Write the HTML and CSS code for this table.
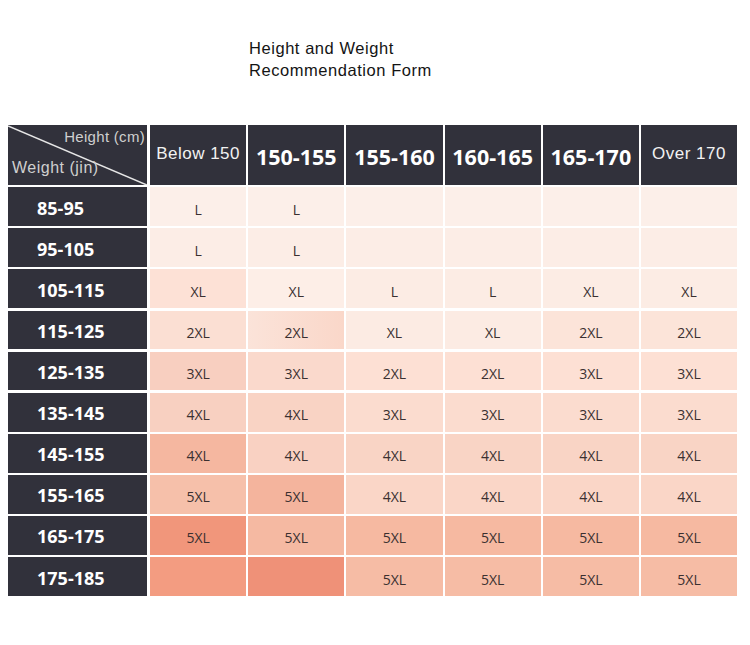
FILE: index.html
```html
<!DOCTYPE html>
<html>
<head>
<meta charset="utf-8">
<link rel="stylesheet" href="styles.css">
</head>
<body>
<div class="page">
  <h1 class="title">Height and Weight<br>Recommendation Form</h1>
  <div class="table">
    <div class="corner">
      <svg class="diag" viewBox="0 0 139 60" preserveAspectRatio="none"><line x1="0" y1="1" x2="139" y2="60" stroke="#e6e6e6" stroke-width="1.6"/></svg>
      <span class="c-h">Height (cm)</span>
      <span class="c-w">Weight (jin)</span>
    </div>
    <div class="hd reg">Below 150</div>
    <div class="hd">150-155</div>
    <div class="hd">155-160</div>
    <div class="hd">160-165</div>
    <div class="hd">165-170</div>
    <div class="hd reg">Over 170</div>

    <div class="rh">85-95</div>
    <div class="c r1">L</div><div class="c r1">L</div><div class="c r1"></div><div class="c r1"></div><div class="c r1"></div><div class="c r1"></div>

    <div class="rh">95-105</div>
    <div class="c r2">L</div><div class="c r2">L</div><div class="c r2"></div><div class="c r2"></div><div class="c r2"></div><div class="c r2"></div>

    <div class="rh">105-115</div>
    <div class="c a3">XL</div><div class="c b3">XL</div><div class="c r3">L</div><div class="c r3">L</div><div class="c r3">XL</div><div class="c r3">XL</div>

    <div class="rh">115-125</div>
    <div class="c a4">2XL</div><div class="c b4">2XL</div><div class="c r4l">XL</div><div class="c r4l">XL</div><div class="c r4">2XL</div><div class="c r4">2XL</div>

    <div class="rh">125-135</div>
    <div class="c a5">3XL</div><div class="c b5">3XL</div><div class="c r5">2XL</div><div class="c r5">2XL</div><div class="c r5">3XL</div><div class="c r5">3XL</div>

    <div class="rh">135-145</div>
    <div class="c a6">4XL</div><div class="c b6">4XL</div><div class="c r6">3XL</div><div class="c r6">3XL</div><div class="c r6">3XL</div><div class="c r6">3XL</div>

    <div class="rh">145-155</div>
    <div class="c a7">4XL</div><div class="c b7">4XL</div><div class="c r7">4XL</div><div class="c r7">4XL</div><div class="c r7">4XL</div><div class="c r7">4XL</div>

    <div class="rh">155-165</div>
    <div class="c a8">5XL</div><div class="c b8">5XL</div><div class="c r8">4XL</div><div class="c r8">4XL</div><div class="c r8">4XL</div><div class="c r8">4XL</div>

    <div class="rh">165-175</div>
    <div class="c a9">5XL</div><div class="c b9">5XL</div><div class="c r9">5XL</div><div class="c r9">5XL</div><div class="c r9">5XL</div><div class="c r9">5XL</div>

    <div class="rh">175-185</div>
    <div class="c a10"></div><div class="c b10"></div><div class="c r10">5XL</div><div class="c r10">5XL</div><div class="c r10">5XL</div><div class="c r10">5XL</div>
  </div>
</div>
</body>
</html>
```

FILE: styles.css
```css
html, body {
  margin: 0;
  padding: 0;
  background: #ffffff;
}

.page {
  width: 750px;
  height: 645px;
  padding: 37px 0 0 8px;
  box-sizing: border-box;
}

.title {
  margin: 0 0 44px 241px;
  font-family: "Liberation Sans", Arial, sans-serif;
  font-weight: normal;
  font-size: 16.5px;
  line-height: 22px;
  color: #141414;
  letter-spacing: 0.55px;
}

.table {
  display: grid;
  grid-template-columns: 140px repeat(6, 96.2px);
  grid-template-rows: 60px repeat(10, 38.8px);
  column-gap: 2px;
  row-gap: 2.3px;
  width: 729px;
}

.corner {
  position: relative;
  background: #31313b;
  display: flex;
  flex-direction: column;
  justify-content: space-between;
  padding: 3px 2px 8px 4px;
  margin-right: 1px;
  font-family: "Liberation Sans", Arial, sans-serif;
  color: #cfcfcf;
  overflow: hidden;
}

.diag {
  position: absolute;
  left: 0;
  top: 0;
  width: 100%;
  height: 100%;
}

.c-h {
  position: relative;
  align-self: flex-end;
  font-size: 15px;
  letter-spacing: 0.3px;
}

.c-w {
  position: relative;
  align-self: flex-start;
  font-size: 16px;
  letter-spacing: 0.5px;
}

.hd {
  background: #31313b;
  color: #ffffff;
  display: flex;
  align-items: center;
  justify-content: center;
  font-family: "Open Sans", sans-serif;
  font-weight: bold;
  font-size: 21.5px;
  padding-top: 3px;
}

.hd.reg {
  font-family: "Liberation Sans", Arial, sans-serif;
  font-weight: normal;
  font-size: 17px;
  letter-spacing: 0.5px;
  color: #f2f2f2;
  padding-top: 0;
  padding-bottom: 2px;
}

.rh {
  background: #31313b;
  color: #ffffff;
  display: flex;
  align-items: center;
  padding-left: 29px;
  margin-right: 1px;
  font-family: "Open Sans", sans-serif;
  font-weight: bold;
  font-size: 18px;
  padding-top: 2px;
}

.c {
  display: flex;
  align-items: center;
  justify-content: center;
  font-family: "Open Sans", sans-serif;
  font-size: 14px;
  color: #3a3030;
  padding-top: 5px;
}

.r1 { background: #fcefe9; }
.r2 { background: #fcede6; }

.a3 { background: #fde1d6; }
.b3 { background: #fdeee7; }
.r3 { background: #fcece4; }

.a4 { background: #fbdfd3; }
.b4 { background: linear-gradient(90deg, #fbe3d9, #fad7c9); }
.r4l { background: #fcebe3; }
.r4 { background: #fce4d9; }

.a5 { background: #f8cfc0; }
.b5 { background: #fad9cc; }
.r5 { background: #fde0d4; }

.a6 { background: #f8d0c1; }
.b6 { background: #f9d3c4; }
.r6 { background: #fbdccf; }

.a7 { background: #f5b7a0; }
.b7 { background: #f9d1c2; }
.r7 { background: #f9d4c5; }

.a8 { background: #f6c0aa; }
.b8 { background: #f4b49d; }
.r8 { background: #fad6c7; }

.a9 { background: #f1967b; }
.b9 { background: #f5b9a2; }
.r9 { background: #f6b9a1; }

.a10 { background: #f39c81; }
.b10 { background: #ef9178; }
.r10 { background: #f6bca5; }
```
